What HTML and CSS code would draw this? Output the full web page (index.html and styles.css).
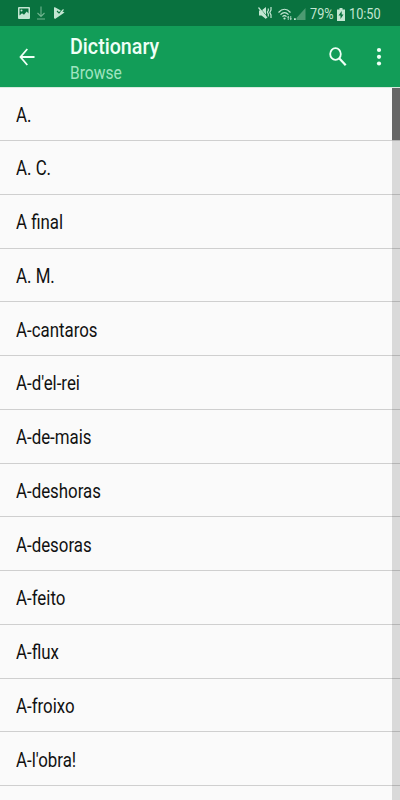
FILE: index.html
```
<!DOCTYPE html>
<html lang="en">
<head>
  <meta charset="UTF-8">
  <meta name="viewport" content="width=device-width, initial-scale=1.0">
  <title>Dictionary</title>
  <link rel="stylesheet" href="styles.css">
</head>
<body>

  <!-- Status bar -->
  <div class="status-bar">
    <svg class="icon-image" width="12" height="12" viewBox="0 0 12 12">
      <path fill="currentColor" fill-rule="evenodd" d="M1 0h10a1 1 0 0 1 1 1v10a1 1 0 0 1-1 1H1a1 1 0 0 1-1-1V1a1 1 0 0 1 1-1zM1.5 1.5v7l2.5-2.3 2 1.6 2.7-3.3 1.8 2V1.5zM3.5 2.5a1 1 0 1 1 0 2 1 1 0 0 1 0-2z"/>
    </svg>
    <svg class="icon-download" width="10" height="14" viewBox="0 0 10 14">
      <path fill="none" stroke="currentColor" stroke-width="1.1" d="M5 0.5v10M1.5 7L5 10.500 8.500 7M1 13h8"/>
    </svg>
    <svg class="icon-play" width="11" height="12" viewBox="0 0 11 12">
      <path fill="currentColor" d="M0.500 0L10.500 5.500 1 12 0 11V0.500z"/>
      <path fill="none" stroke="#09723f" stroke-width="1.100" d="M3 4l2 2 4.500-4.500"/>
      <path fill="none" stroke="currentColor" stroke-width="1.100" d="M6.500 5.500l3-3"/>
    </svg>

    <div class="status-right">
      <svg class="icon-mute" width="14" height="14" viewBox="0 0 14 14">
        <path fill="currentColor" d="M1 4.500h2.500L8 1v12L3.500 9.500H1z"/>
        <path fill="none" stroke="#09723f" stroke-width="0.800" d="M1.500 1.500l7.500 9"/>
        <path fill="none" stroke="currentColor" stroke-width="1.200" d="M0.500 1.500l8.500 10.500M10.300 2.500v2l-1 1.500 1 2v2.500M13 1v3l-1.200 2.500 1.200 2.500v3"/>
      </svg>
      <svg class="icon-wifi" width="15" height="13" viewBox="0 0 15 13">
        <path fill="none" stroke="currentColor" stroke-width="1.200" d="M0.500 4.500Q6.500-2 12.500 4.500M2.500 6.700q4-4.200 8 0M4.500 8.700q2-2 4 0"/>
        <circle cx="6.500" cy="10.500" r="1.100" fill="currentColor"/>
        <path fill="currentColor" d="M9 9.500l1.200-1.800 1.200 1.800h-.8V12h-.8V9.500zM12.400 8h.8v2.500h.8l-1.200 1.800-1.200-1.800h.8z"/>
      </svg>
      <svg class="icon-signal" width="12" height="12" viewBox="0 0 12 12">
        <path fill="#4d9b72" d="M11.500 0v12H2.500V10z"/>
        <path fill="currentColor" d="M0 10.300h1.800V12H0z"/>
      </svg>
      <span class="status-text battery-level">79%</span>
      <svg class="icon-battery" width="8" height="13" viewBox="0 0 8 13">
        <path fill="currentColor" d="M2.500 0h3v1.500H8V13H0V1.500h2.500z"/>
        <path fill="#09723f" d="M4.700 3L1.500 7.500h2V11l3-4.500H4.700z"/>
      </svg>
      <span class="status-text clock">10:50</span>
    </div>
  </div>

  <!-- Toolbar -->
  <div class="toolbar">
    <svg class="icon-back" width="16" height="18" viewBox="0 0 16 18">
      <path fill="none" stroke="currentColor" stroke-width="1.800" d="M15.500 9H1.500M8.300 1L1.500 9l6.800 8"/>
    </svg>
    <div class="titles">
      <h1>Dictionary</h1>
      <h2>Browse</h2>
    </div>
    <svg class="icon-search" width="18" height="20" viewBox="0 0 18 20">
      <ellipse cx="6.500" cy="7" rx="5.300" ry="5.900" fill="none" stroke="currentColor" stroke-width="1.800"/>
      <path fill="none" stroke="currentColor" stroke-width="2.200" d="M10.200 11.200l6.500 7"/>
    </svg>
    <svg class="icon-more" width="6" height="20" viewBox="0 0 6 20">
      <circle cx="3" cy="3" r="2.100" fill="currentColor"/>
      <circle cx="3" cy="9.800" r="2.100" fill="currentColor"/>
      <circle cx="3" cy="16.500" r="2.100" fill="currentColor"/>
    </svg>
  </div>

  <!-- Word list -->
  <div class="content">
    <ul class="word-list">
      <li><span>A.</span></li>
      <li><span>A. C.</span></li>
      <li><span>A final</span></li>
      <li><span>A. M.</span></li>
      <li><span>A-cantaros</span></li>
      <li><span>A-d'el-rei</span></li>
      <li><span>A-de-mais</span></li>
      <li><span>A-deshoras</span></li>
      <li><span>A-desoras</span></li>
      <li><span>A-feito</span></li>
      <li><span>A-flux</span></li>
      <li><span>A-froixo</span></li>
      <li><span>A-l'obra!</span></li>
    </ul>
    <!-- Scrollbar lies over the list -->
    <div class="scroll-track">
      <div class="scroll-thumb"></div>
    </div>
  </div>

</body>
</html>
```
FILE: styles.css
```
* {
  box-sizing: border-box;
}

body {
  margin: 0;
  height: 800px;
  overflow: hidden;
  display: flex;
  flex-direction: column;
  font-family: Roboto, sans-serif;
  background-color: #fafafa;
  color: #111;
}

svg {
  display: block;
  flex: none;
}

/* Status bar */
.status-bar {
  height: 26px;
  flex: none;
  display: flex;
  align-items: center;
  padding-left: 18px;
  background-color: #09723f;
  color: #c3e6d2;
}

.icon-download {
  margin-left: 6px;
  color: #70b48f;
}

.icon-play {
  margin-left: 8px;
}

.status-right {
  display: flex;
  align-items: center;
  margin-left: auto;
  width: 142px;
  padding-top: 2px;
}

.icon-mute {
  margin-top: -2px;
}

.icon-wifi {
  margin-left: 6px;
}

.icon-signal {
  margin-left: 1px;
}

.status-text {
  font-size: 15.5px;
  line-height: 20px;
  transform: scaleX(0.82);
  transform-origin: left;
  white-space: nowrap;
}

.battery-level {
  width: 23px;
  margin-left: 4px;
}

.icon-battery {
  margin-left: 4px;
}

.clock {
  width: 34px;
  margin-left: 4px;
}

/* Toolbar */
.toolbar {
  height: 61px;
  flex: none;
  display: flex;
  align-items: center;
  padding-left: 19px;
  background-color: #129d58;
  color: #effff6;
}

.titles {
  width: 259px;
  margin-left: 35px;
  padding-top: 7px;
}

h1,
h2 {
  margin: 0;
  transform-origin: left;
}

h1 {
  font-size: 21.5px;
  font-weight: 500;
  line-height: 26px;
  transform: scaleX(0.915);
}

h2 {
  font-size: 17.5px;
  font-weight: 400;
  line-height: 26px;
  color: #a0e4c0;
  transform: scaleX(0.89);
}

.icon-more {
  margin-left: 29px;
}

/* Word list */
.content {
  flex: 1;
  min-height: 0;
  position: relative;
  border-top: 1px solid #d8eadf;
}

.word-list {
  margin: 0;
  padding: 0;
  list-style: none;
}

.word-list li {
  height: 53.75px;
  display: flex;
  align-items: center;
  padding: 3px 0 0 16px;
  border-bottom: 1px solid #cfcfcf;
}

.word-list li:first-child {
  height: 53px;
}

.word-list span {
  font-size: 19.5px;
  transform: scaleX(0.865);
  transform-origin: left;
  white-space: nowrap;
}

.scroll-track {
  position: absolute;
  top: 0;
  right: 0;
  bottom: 0;
  width: 8px;
  background-color: rgba(0, 0, 0, 0.13);
}

.scroll-thumb {
  height: 52px;
  background-color: #666;
}
```
